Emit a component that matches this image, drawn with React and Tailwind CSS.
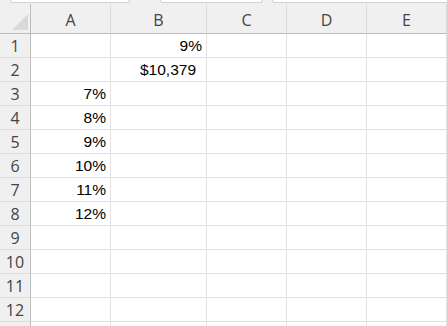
import React from "react";

const cols = ["A", "B", "C", "D", "E"];
const data = {
  1: { B: "9%" },
  2: { B: "$10,379" },
  3: { A: "7%" },
  4: { A: "8%" },
  5: { A: "9%" },
  6: { A: "10%" },
  7: { A: "11%" },
  8: { A: "12%" },
};

export default function App() {
  const rows = Array.from({ length: 13 }, (_, i) => i + 1);
  return (
    <div className="w-[447px] h-[326px] overflow-hidden bg-white relative" style={{ fontFamily: '"Liberation Sans", Arial, sans-serif' }}>
      <div className="h-[4px] bg-[#f0f0f0] flex">
        <div className="ml-[10px] w-[120px] h-[3px] bg-white border-b border-x border-[#d2d2d2] rounded-b-[3px]" />
        <div className="ml-[30px] w-[103px] h-[3px] bg-white border-b border-x border-[#d2d2d2] rounded-b-[3px]" />
        <div className="ml-[9px] flex-1 h-[3px] bg-white border-b border-l border-[#d2d2d2] rounded-bl-[3px]" />
      </div>
      <div className="grid grid-cols-[31px_80px_96px_80px_80px_80px]">
        <div className="h-[30px] bg-[#f0f0f0] border-b border-r border-[#bdbdbd] relative">
          <div className="absolute left-[12px] top-[10px] w-0 h-0 border-l-[16px] border-l-transparent border-b-[16px] border-b-[#d9d9d9]" />
        </div>
        {cols.map((c) => (
          <div
            key={c}
            className="h-[30px] bg-[#f0f0f0] border-b border-r border-b-[#bdbdbd] border-r-[#dcdcdc] flex items-center justify-center text-[16px] text-[#444]"
            style={{ fontFamily: '"Open Sans", "Noto Sans", sans-serif' }}
          >
            <span className="pt-[2px]">{c}</span>
          </div>
        ))}
        {rows.map((r) => (
          <React.Fragment key={r}>
            <div
              className="h-[24px] bg-[#f0f0f0] border-r border-b border-r-[#bdbdbd] border-b-[#dcdcdc] flex items-center justify-center text-[16px] text-[#444]"
              style={{ fontFamily: '"Open Sans", "Noto Sans", sans-serif' }}
            >
              <span className="pt-[1px]">{r < 13 ? r : ""}</span>
            </div>
            {cols.map((c) => {
              const v = data[r] && data[r][c];
              const isCur = v && v.startsWith("$");
              return (
                <div
                  key={c}
                  className={`h-[24px] border-r border-b border-[#e1e1e1] flex items-end justify-end text-[15.5px] text-black leading-none pb-[4px] ${isCur ? "pr-[10px]" : "pr-[4px]"}`}
                >
                  {v || ""}
                </div>
              );
            })}
          </React.Fragment>
        ))}
      </div>
    </div>
  );
}
